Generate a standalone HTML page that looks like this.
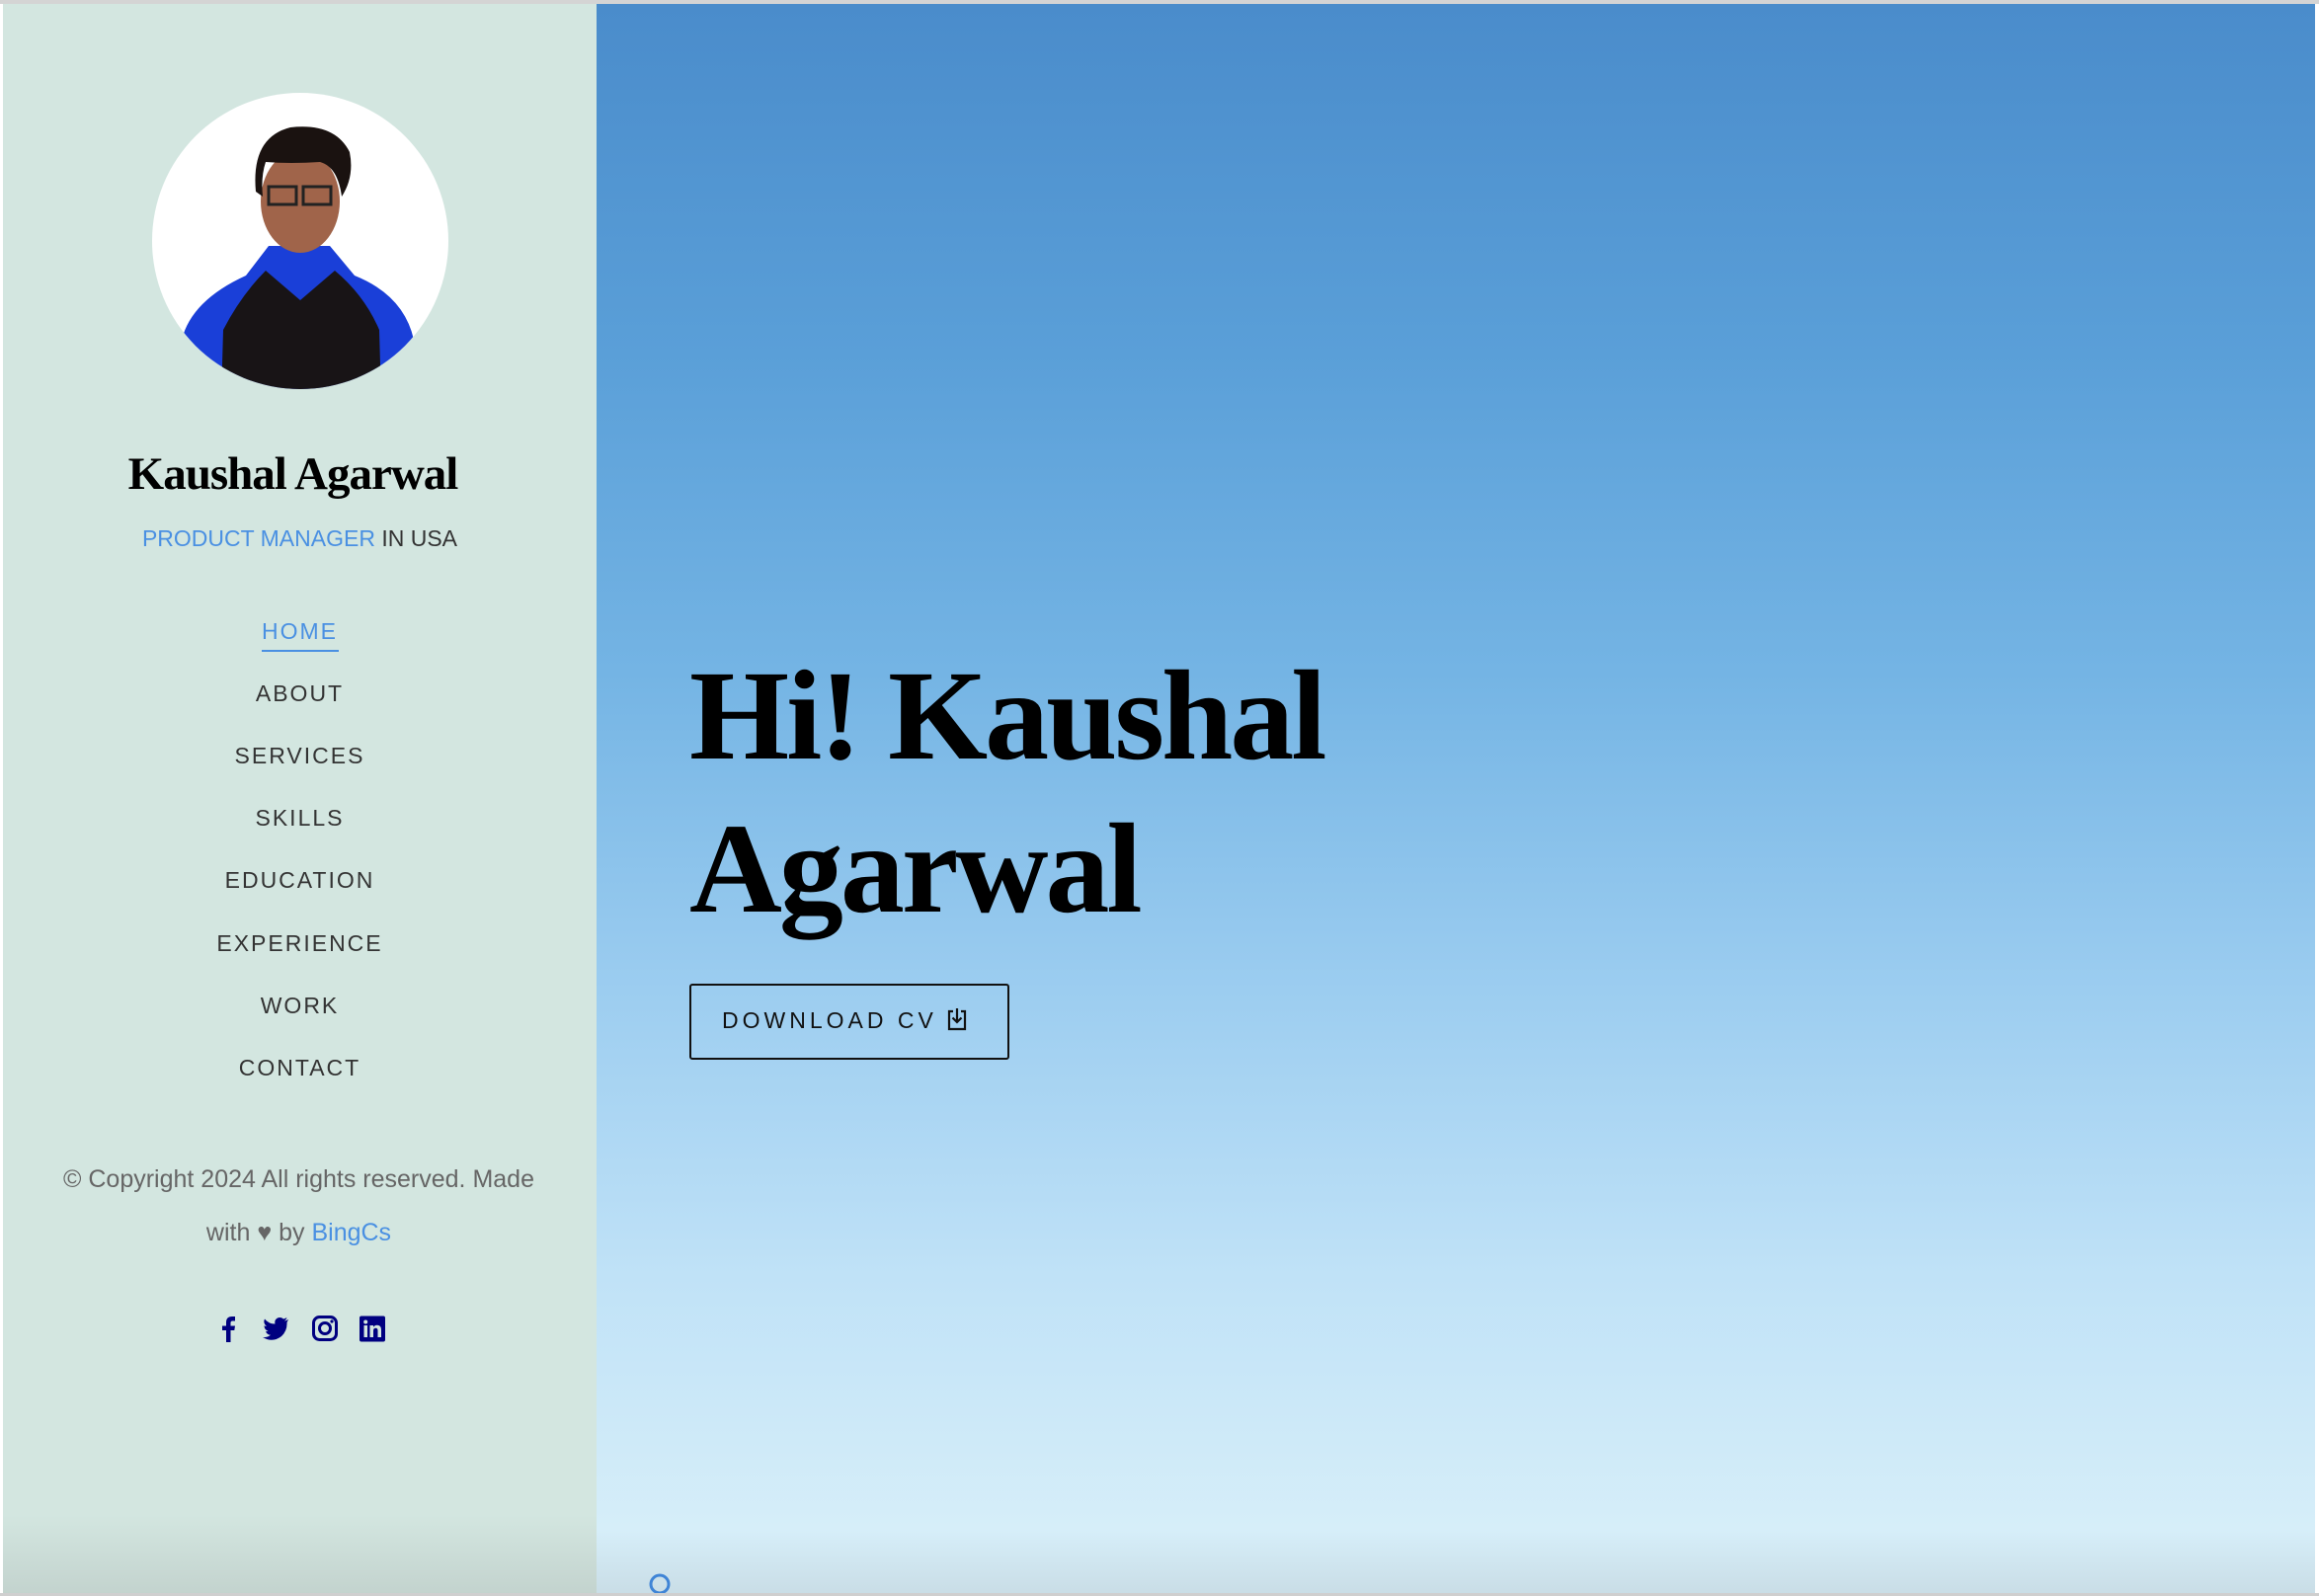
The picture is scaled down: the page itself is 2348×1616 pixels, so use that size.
<!DOCTYPE html>
<html><head><meta charset="utf-8"><style>
*{margin:0;padding:0;box-sizing:border-box}
html,body{width:2348px;height:1616px;overflow:hidden;background:#fff}
body{position:relative;font-family:"Liberation Sans",sans-serif}
.top{position:absolute;left:0;top:0;width:2348px;height:4px;background:#d4d4d4}
.side{position:absolute;left:3px;top:4px;width:601px;height:1610px;background:linear-gradient(#d3e6e0 0,#d3e6e0 95%,#c3d3ce 100%)}
.hero{position:absolute;left:604px;top:4px;width:1740px;height:1610px;background:linear-gradient(180deg,#4a8ccb 0%,#5a9fd8 22%,#74b4e4 42%,#9ccdf0 62%,#c0e2f7 80%,#d6eef9 96%,#c9dde6 100%)}
.c{position:absolute;text-align:center;left:3px;width:601px}
.name{top:453px;left:-4px;font-family:"Liberation Serif",serif;font-weight:bold;font-size:47px;color:#000;letter-spacing:-1px}
.sub{top:532px;font-size:23px;color:#333}
.sub span{color:#4a90e2}
.nav{font-size:23px;letter-spacing:2px;color:#333}
.nav.home{color:#4a90e2}
.ul{position:absolute;left:265px;top:658px;width:78px;height:2px;background:#4a90e2}
.copy{top:1167px;font-size:25px;color:#666;line-height:54px;left:10px;width:585px}
.copy a{color:#4a90e2}
h1{position:absolute;left:698px;top:648px;font-family:"Liberation Serif",serif;font-weight:bold;font-size:130px;line-height:155px;color:#000;letter-spacing:-3px}
.btn{position:absolute;left:698px;top:996px;width:324px;height:77px;border:2px solid #111;border-radius:3px;font-size:23px;letter-spacing:4px;color:#111;padding:22px 0 0 31px}
</style></head><body>
<div class="top"></div>
<div class="side"></div>
<svg style="position:absolute;left:154px;top:94px" width="300" height="300" viewBox="0 0 300 300">
<defs><clipPath id="cp"><circle cx="150" cy="150" r="150"/></clipPath></defs>
<circle cx="150" cy="150" r="150" fill="#fff"/>
<g clip-path="url(#cp)">
<path d="M30 250 Q40 210 95 185 L118 155 L180 155 L205 185 Q255 205 265 250 L265 310 L30 310Z" fill="#1a3fd8"/>
<path d="M70 310 L72 240 Q90 205 115 180 L150 210 L185 180 Q215 205 230 240 L232 310Z" fill="#181416"/>
<ellipse cx="150" cy="110" rx="40" ry="52" fill="#a0644a"/>
<path d="M105 100 Q100 45 140 35 Q185 30 200 60 Q205 85 192 105 Q188 75 170 70 Q140 72 115 70 Q110 85 112 105Z" fill="#1a1210"/>
<rect x="118" y="95" width="28" height="18" fill="none" stroke="#222" stroke-width="3"/>
<rect x="153" y="95" width="28" height="18" fill="none" stroke="#222" stroke-width="3"/>
</g></svg>
<div class="c name">Kaushal Agarwal</div>
<div class="c sub"><span>PRODUCT MANAGER</span> IN USA</div>
<div class="c nav home" style="top:626px">HOME</div>
<div class="ul"></div>
<div class="c nav" style="top:689px">ABOUT</div>
<div class="c nav" style="top:752px">SERVICES</div>
<div class="c nav" style="top:815px">SKILLS</div>
<div class="c nav" style="top:878px">EDUCATION</div>
<div class="c nav" style="top:942px">EXPERIENCE</div>
<div class="c nav" style="top:1005px">WORK</div>
<div class="c nav" style="top:1068px">CONTACT</div>
<div class="c copy">© Copyright 2024 All rights reserved. Made<br>with ♥ by <a>BingCs</a></div>
<svg style="position:absolute;left:220px;top:1332px" width="175" height="27" viewBox="0 0 175 27" fill="#000080">
<path d="M9 27V15H5V10.5H9V7Q9 1 15 1H18V5.5H15.5Q13.5 5.5 13.5 7.5V10.5H18L17.3 15H13.5V27Z"/>
<path d="M72 4Q69 5.5 68 5.5Q70 4 70.5 2Q68.5 3.2 67 3.5Q64.5 1 61 2.5Q57.5 4.5 58.5 8.5Q52 8.5 48 3.5Q46 7.5 50 11Q48.5 11 47.5 10.3Q47.5 14.5 51.5 15.8Q50 16.2 49 16Q50.2 19.5 54 19.8Q50.5 22.5 46 22Q56 28 65 21Q71 15.5 70.5 7Z"/>
<rect x="97.5" y="1.5" width="23" height="23" rx="6" fill="none" stroke="#000080" stroke-width="3"/>
<circle cx="109" cy="13" r="5.5" fill="none" stroke="#000080" stroke-width="3"/>
<circle cx="116" cy="6" r="1.6"/>
<rect x="144" y="0.5" width="26" height="26" rx="2"/>
<rect x="148.5" y="10" width="3.5" height="12" fill="#d3e6e0"/>
<circle cx="150.2" cy="6.5" r="2" fill="#d3e6e0"/>
<path d="M154.5 10H158V11.8Q159.5 9.6 162 9.7Q166 9.8 166 14.5V22H162.5V15.3Q162.5 12.8 160.5 12.8Q158 12.8 158 15.5V22H154.5Z" fill="#d3e6e0"/>
</svg>
<div class="hero"></div>
<h1>Hi! Kaushal<br>Agarwal</h1>
<div class="btn">DOWNLOAD CV <svg width="20" height="24" viewBox="0 0 20 24" style="vertical-align:-3px"><path d="M6 4H2V22H18V4H14" fill="none" stroke="#111" stroke-width="2.2"/><path d="M10 1V15M5.5 10.5L10 15L14.5 10.5" fill="none" stroke="#111" stroke-width="2.2"/></svg></div>
<svg style="position:absolute;left:656px;top:1592px" width="24" height="24"><circle cx="12" cy="12" r="9" fill="none" stroke="#3f84d6" stroke-width="3"/></svg>
<div style="position:absolute;left:0;top:1613px;width:2348px;height:3px;background:#cfcfcf"></div>
</body></html>
